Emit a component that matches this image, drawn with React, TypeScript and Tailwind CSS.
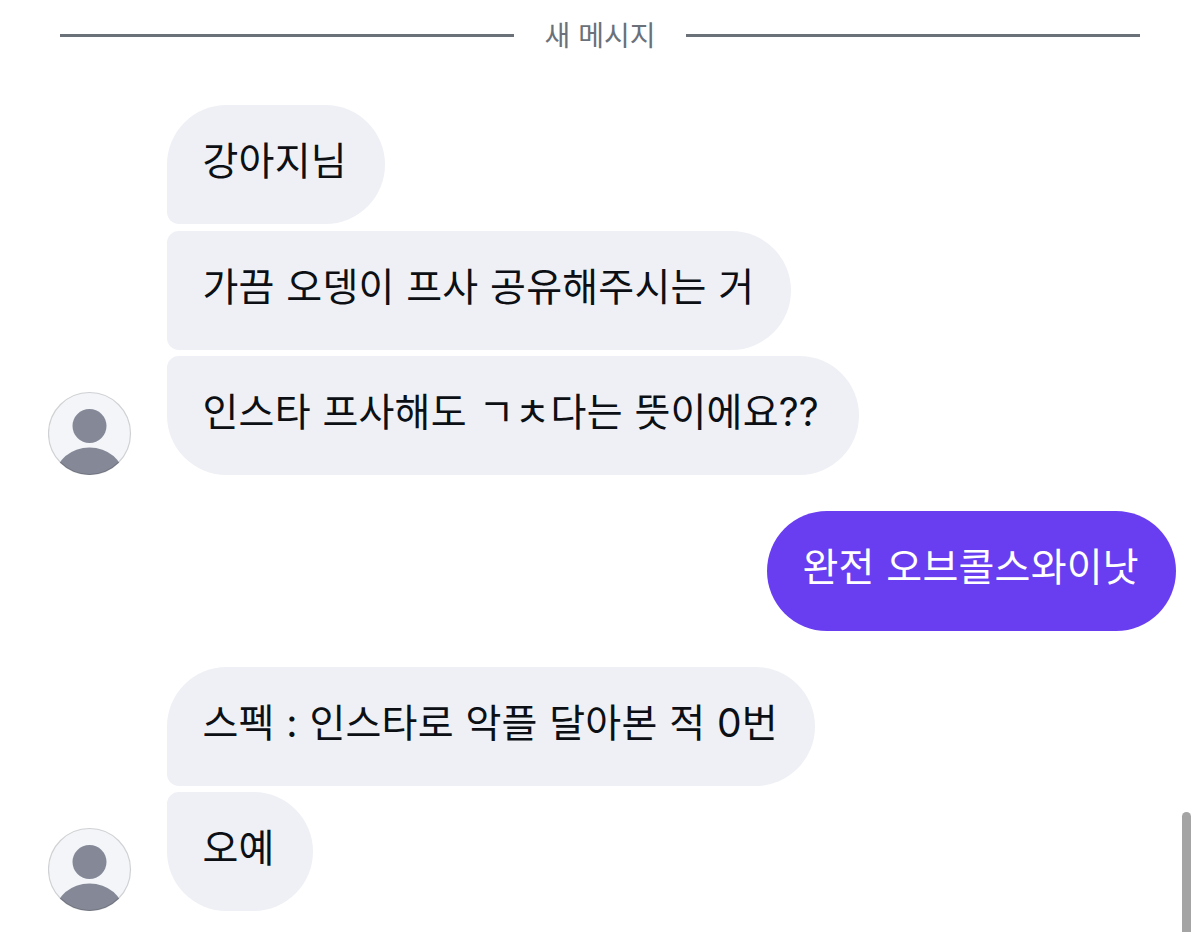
const FONT = "font-['Inter','Noto_Sans_CJK_KR',sans-serif]";

type Message = {
  text: string;
  width: string;
  radius: string;
};

const firstGroup: Message[] = [
  { text: '강아지님', width: 'w-[218px]', radius: 'rounded-[60px] rounded-bl-[12px]' },
  { text: '가끔 오뎅이 프사 공유해주시는 거', width: 'w-[624px]', radius: 'rounded-[60px] rounded-l-[12px]' },
  { text: '인스타 프사해도 ㄱㅊ다는 뜻이에요??', width: 'w-[692px]', radius: 'rounded-[60px] rounded-tl-[12px]' },
];

const secondGroup: Message[] = [
  { text: '스펙 : 인스타로 악플 달아본 적 0번', width: 'w-[648px]', radius: 'rounded-[60px] rounded-bl-[12px]' },
  { text: '오예', width: 'w-[146px]', radius: 'rounded-[60px] rounded-tl-[12px]' },
];

const BUBBLE =
  'h-[119.25px] pl-[35.5px] pt-[26px] text-[39px] leading-[60px] tracking-[0.2px] [word-spacing:0.5px] whitespace-nowrap';

function Avatar() {
  return (
    <svg className="size-[84px] shrink-0" viewBox="0 0 84 84">
      <defs>
        <clipPath id="avatar-clip">
          <circle cx="41.5" cy="42.5" r="41.5" />
        </clipPath>
      </defs>
      <circle cx="41.5" cy="42.5" r="41.5" fill="#f3f5f8" />
      <g clipPath="url(#avatar-clip)" fill="#858997">
        <circle cx="41.5" cy="35" r="17" />
        <ellipse cx="41.5" cy="85.5" rx="34" ry="29" />
      </g>
      <circle cx="41.5" cy="42.5" r="41" fill="none" stroke="#000" strokeOpacity="0.15" strokeWidth="1.2" />
    </svg>
  );
}

function Group({ messages }: { messages: Message[] }) {
  return (
    <div className="flex items-end gap-[35px] pl-12">
      <Avatar />
      <div className="flex flex-col gap-[6.25px]">
        {messages.map((m) => (
          <div key={m.text} className={`bg-[#eff0f5] text-[#0c1014] ${BUBBLE} ${m.width} ${m.radius}`}>
            {m.text}
          </div>
        ))}
      </div>
    </div>
  );
}

export default function App() {
  return (
    <main className={`relative h-[932px] w-[1200px] overflow-hidden bg-white ${FONT}`}>
      {/* New message divider */}
      <div className="flex h-[105px] items-start px-[60px] pt-[15px]">
        <div className="mt-[19px] h-[3px] w-[454px] bg-[#6a7178]" />
        <div className="flex-1 text-center text-[28px] leading-[42px] text-[#6a717a]">새 메시지</div>
        <div className="mt-[19px] h-[3px] w-[454px] bg-[#6a7178]" />
      </div>

      <Group messages={firstGroup} />

      <div className="my-9 flex justify-end pr-6">
        <div className={`w-[409px] rounded-full bg-[#693ef1] text-white ${BUBBLE}`}>완전 오브콜스와이낫</div>
      </div>

      <Group messages={secondGroup} />

      {/* Scrollbar thumb */}
      <div className="absolute right-[9px] top-[812px] h-[130px] w-[9px] rounded-full bg-[#a4a4a4]" />
    </main>
  );
}
